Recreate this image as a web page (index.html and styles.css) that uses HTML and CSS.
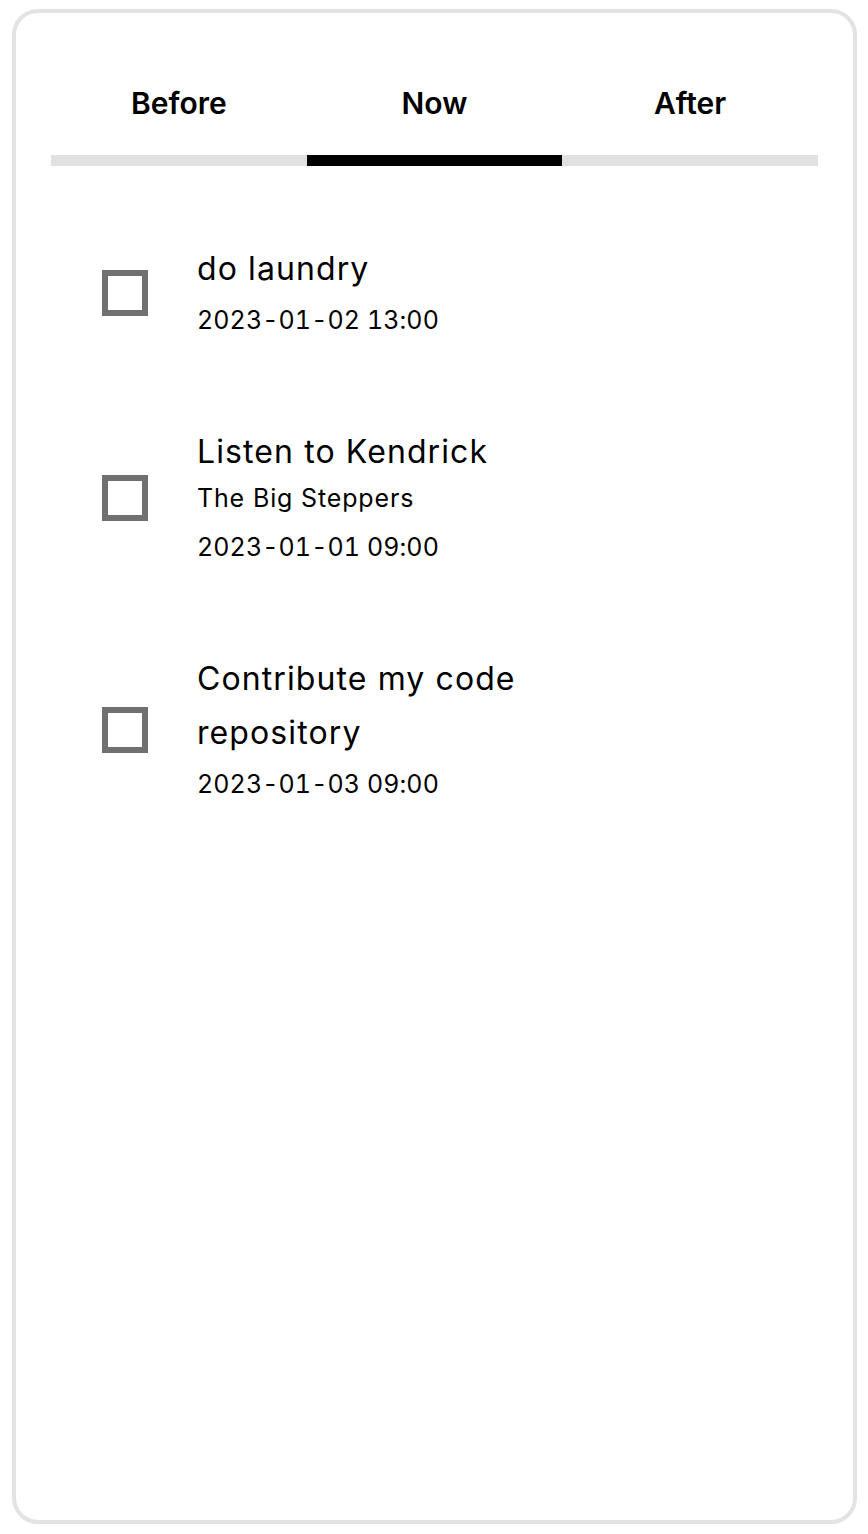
FILE: index.html
```html
<!DOCTYPE html>
<html lang="en">
<head>
<meta charset="utf-8">
<title>Todo</title>
<link rel="stylesheet" href="styles.css">
</head>
<body>
<div class="page">
  <div class="frame">
    <div class="tabs">
      <div class="tab">Before</div>
      <div class="tab active">Now</div>
      <div class="tab">After</div>
    </div>
    <ul class="list">
      <li class="item">
        <span class="check"></span>
        <div class="text">
          <div class="title">do laundry</div>
          <div class="date">2023-01-02 13:00</div>
        </div>
      </li>
      <li class="item">
        <span class="check"></span>
        <div class="text">
          <div class="title">Listen to Kendrick</div>
          <div class="sub">The Big Steppers</div>
          <div class="date">2023-01-01 09:00</div>
        </div>
      </li>
      <li class="item">
        <span class="check"></span>
        <div class="text">
          <div class="title narrow">Contribute my code repository</div>
          <div class="date">2023-01-03 09:00</div>
        </div>
      </li>
    </ul>
  </div>
</div>
</body>
</html>
```

FILE: styles.css
```css
html, body {
  margin: 0;
  padding: 0;
  background: #ffffff;
}

body {
  font-family: Inter, "Noto Sans", "Liberation Sans", sans-serif;
  color: #000;
}

.page {
  padding: 9px 11px 10px 12px;
}

.frame {
  box-sizing: border-box;
  height: 1515px;
  border: 4px solid #e3e3e3;
  border-radius: 26px;
  padding: 0 35px;
}

.tabs {
  display: grid;
  grid-template-columns: 1fr 1fr 1fr;
}

.tab {
  padding-top: 66px;
  padding-bottom: 28px;
  line-height: 48px;
  font-size: 30px;
  font-weight: 600;
  text-align: center;
  border-bottom: 11px solid #e1e1e1;
}

.tab.active {
  border-bottom-color: #000;
}

.list {
  list-style: none;
  margin: 0;
  padding: 76px 0 0 51px;
  display: flex;
  flex-direction: column;
  gap: 81px;
}

.item {
  display: flex;
  align-items: center;
  gap: 49px;
}

.check {
  box-sizing: border-box;
  width: 46px;
  height: 46px;
  border: 6px solid #707070;
  flex: none;
}

.text {
  display: flex;
  flex-direction: column;
}

.title {
  font-size: 32px;
  line-height: 54px;
  letter-spacing: 1.1px;
}

.title.narrow {
  width: 340px;
}

.sub {
  font-size: 25px;
  line-height: 38px;
  margin-bottom: 6px;
  letter-spacing: 0.85px;
}

.date {
  font-size: 25px;
  line-height: 48px;
  letter-spacing: 0.1px;
  font-variant-numeric: tabular-nums;
}
```
